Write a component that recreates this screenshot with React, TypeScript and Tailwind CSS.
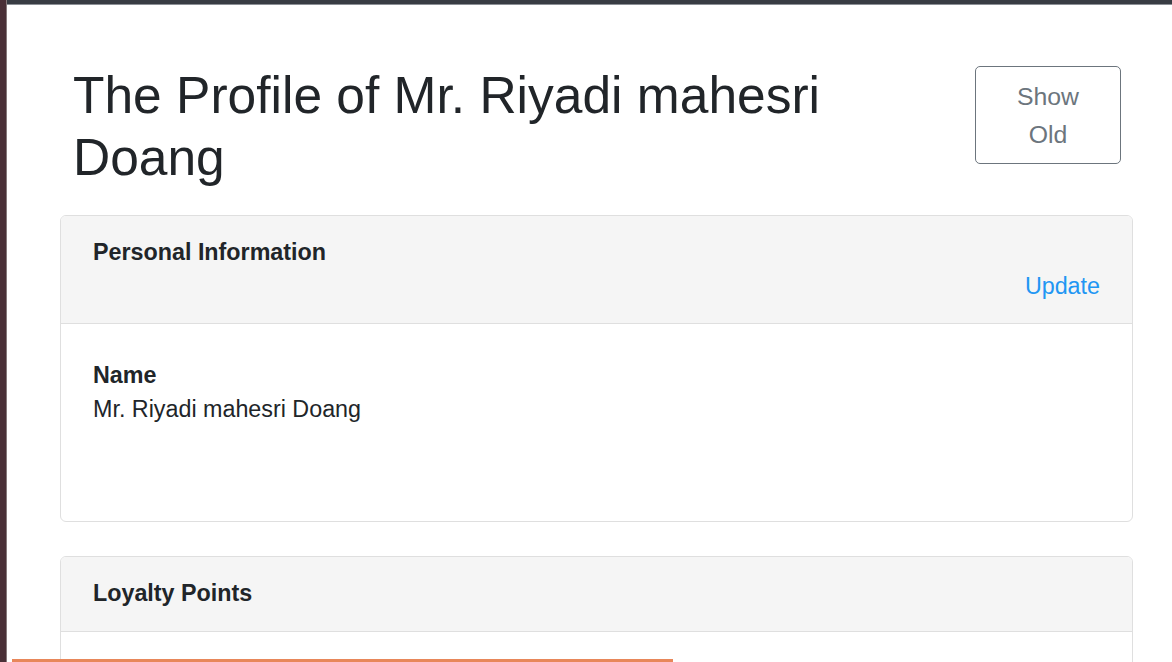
import React from 'react';

const font = { fontFamily: '"Liberation Sans", Arial, sans-serif' };

const App: React.FC = () => {
  return (
    <div className="relative flex h-[662px] w-[1172px] overflow-hidden bg-white text-[#212529]" style={font}>
      {/* left window edge */}
      <div className="w-[7px] shrink-0 bg-[#4a3037] border-r border-[#86797b]" />

      <div className="flex-1 flex flex-col">
        {/* top window edge */}
        <div className="h-[5px] shrink-0 bg-[#383c43] border-b border-[#8c9096]" />

        <div className="ml-[53px] w-[1073px]">
          {/* Title row */}
          <div className="flex items-start gap-[16px] px-[12px] pt-[60px]">
            <h1 className="flex-1 pl-[1px] text-[51.5px] leading-[1.2] font-normal">
              The Profile of Mr. Riyadi mahesri Doang
            </h1>
            <button className="mt-[1px] w-[146px] h-[98px] shrink-0 rounded-[5px] border border-[#6c757d] pt-[1px] text-[24.8px] leading-[38px] text-[#6c757d]">
              Show
              <br />
              Old
            </button>
          </div>

          {/* Personal Information */}
          <div className="mt-[26px] rounded-[6px] border border-[#dfdfdf] overflow-hidden">
            <div className="bg-[#f5f5f5] border-b border-[#dfdfdf] px-[32px] pt-[19px] pb-[20px] text-[23.3px] leading-[34px]">
              <div className="font-bold">Personal Information</div>
              <div className="text-right">
                <a className="text-[#2196f3]">Update</a>
              </div>
            </div>
            <div className="px-[32px] pt-[34px] pb-[95px] text-[23.3px] leading-[34px]">
              <div className="font-bold">Name</div>
              <div>Mr. Riyadi mahesri Doang</div>
            </div>
          </div>

          {/* Loyalty Points */}
          <div className="mt-[34px] rounded-[6px] border border-[#dfdfdf] overflow-hidden">
            <div className="bg-[#f5f5f5] border-b border-[#dfdfdf] px-[32px] pt-[19px] pb-[20px] text-[23.3px] leading-[35px]">
              <div className="font-bold">Loyalty Points</div>
            </div>
            <div className="h-[120px]" />
          </div>
        </div>
      </div>

      {/* progress bar at the bottom edge */}
      <div className="absolute left-[12px] bottom-0 h-[3px] w-[661px] bg-[#e8875a]" />
    </div>
  );
};

export default App;
